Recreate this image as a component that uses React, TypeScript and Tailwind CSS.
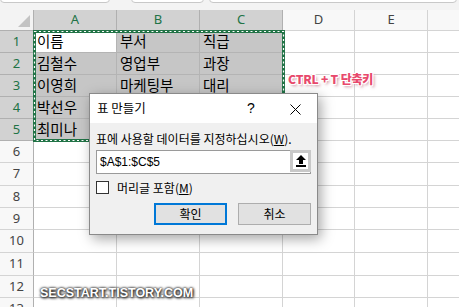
import React from "react";

const COLS = [
  { key: "A", cls: "w-[83px]", sel: true },
  { key: "B", cls: "w-[83px]", sel: true },
  { key: "C", cls: "w-[83px]", sel: true },
  { key: "D", cls: "w-[72px]", sel: false },
  { key: "E", cls: "w-[73px]", sel: false },
  { key: "F", cls: "w-[80px]", sel: false },
];

const ROWS: { h: string; cells: string[] }[] = [
  { h: "h-[22px]", cells: ["이름", "부서", "직급"] },
  { h: "h-[22px]", cells: ["김철수", "영업부", "과장"] },
  { h: "h-[22px]", cells: ["이영희", "마케팅부", "대리"] },
  { h: "h-[22px]", cells: ["박선우", "인사부", "사원"] },
  { h: "h-[22px]", cells: ["최미나", "총무부", "주임"] },
  { h: "h-[22px]", cells: [] },
  { h: "h-[23px]", cells: [] },
  { h: "h-[22px]", cells: [] },
  { h: "h-[22px]", cells: [] },
  { h: "h-[23px]", cells: [] },
  { h: "h-[23px]", cells: [] },
  { h: "h-[22px]", cells: [] },
  { h: "h-[22px]", cells: [] },
];

function Cell({ col, row, text }: { col: number; row: number; text?: string }) {
  const inSel = col < 3 && row < 5;
  const active = col === 0 && row === 0;
  let bg = "bg-white border-[#d4d4d4]";
  if (inSel && !active) bg = "bg-[#c6c6c6] border-[#b4b4b4]";
  if (active) bg = "bg-white border-[#b4b4b4]";
  return (
    <div
      className={`${COLS[col].cls} shrink-0 h-full border-r border-b ${bg} flex items-center pl-[3px] text-[14.5px] leading-none text-black`}
    >
      {text}
    </div>
  );
}

export default function App() {
  return (
    <div className="relative w-[459px] h-[307px] overflow-hidden bg-white font-['Noto_Sans_CJK_KR',sans-serif]">
      {/* formula bar remnants */}
      <div className="relative h-[10px] bg-[#f3f3f3]">
        <div className="absolute left-0 top-[-8px] w-[110px] h-[11px] rounded-b-[4px] bg-white border border-[#c8c8c8]" />
        <div className="absolute left-[131px] top-[-8px] w-[73px] h-[11px] rounded-b-[4px] bg-white border border-[#c8c8c8]" />
        <div className="absolute left-[209px] top-[-8px] w-[248px] h-[11px] rounded-b-[4px] bg-white border border-[#c8c8c8]" />
      </div>

      {/* column headers */}
      <div className="flex h-[21px] font-['Noto_Sans',sans-serif] text-[13px]">
        <div className="relative w-[34px] shrink-0 bg-[#f3f3f3] border-r border-b border-[#b0b0b0]">
          <svg className="absolute right-[3px] bottom-[3px]" width="12" height="12" viewBox="0 0 12 12">
            <polygon points="12,0 12,12 0,12" fill="#c3c3c3" />
          </svg>
        </div>
        {COLS.map((c) => (
          <div
            key={c.key}
            className={`${c.cls} shrink-0 flex items-center justify-center border-r border-b ${
              c.sel
                ? "bg-[#d2d2d2] border-[#b0b0b0] text-[#217346]"
                : "bg-[#f8f8f8] border-[#d4d4d4] text-[#444]"
            }`}
          >
            {c.key}
          </div>
        ))}
      </div>

      {/* rows */}
      {ROWS.map((r, ri) => (
        <div key={ri} className={`flex ${r.h}`}>
          <div
            className={`w-[34px] shrink-0 flex items-center justify-center border-r border-b font-['Noto_Sans',sans-serif] text-[13px] ${
              ri < 5
                ? "bg-[#d2d2d2] border-[#b0b0b0] text-[#217346]"
                : "bg-[#f8f8f8] border-[#d4d4d4] border-r-[#b0b0b0] text-[#444]"
            }`}
          >
            {ri + 1}
          </div>
          {COLS.map((c, ci) => (
            <Cell key={c.key} col={ci} row={ri} text={r.cells[ci]} />
          ))}
        </div>
      ))}

      {/* copy marquee */}
      <svg className="absolute left-[33px] top-[30px]" width="252" height="112" viewBox="0 0 252 112">
        <rect x="1.5" y="1.5" width="249" height="109" fill="none" stroke="#217346" strokeWidth="3" />
        <rect x="1.5" y="1.5" width="249" height="109" fill="none" stroke="#ffffff" strokeWidth="1.2" strokeDasharray="2 2.5" />
      </svg>

      {/* annotation */}
      <div className="absolute left-[288px] top-[73px] text-[12px] font-black leading-none tracking-[-0.2px] text-[#e8496c] font-['Noto_Sans_CJK_KR',sans-serif] [text-shadow:1px_0_0_#fff,-1px_0_0_#fff,0_1px_0_#fff,0_-1px_0_#fff,1px_1px_0_#fff,-1px_-1px_0_#fff,1px_-1px_0_#fff,-1px_1px_0_#fff,2px_2px_3px_rgba(150,40,70,0.55)]">
        CTRL + T 단축키
      </div>

      {/* dialog */}
      <div className="absolute left-[89px] top-[93px] w-[229px] h-[142px] border border-[#8a8a8a] bg-[#f0f0f0] flex flex-col shadow-[3px_4px_12px_rgba(0,0,0,0.35)]">
        <div className="h-[29px] bg-white flex items-center pl-[7px] text-[12.5px] text-black relative">
          <span>표 만들기</span>
          <span className="absolute left-[157px] top-[7px] text-[14px] leading-none font-['Liberation_Sans',sans-serif]">?</span>
          <svg className="absolute left-[200px] top-[10px]" width="11" height="11" viewBox="0 0 11 11">
            <path d="M0.5 0.5 L10.5 10.5 M10.5 0.5 L0.5 10.5" stroke="#000" strokeWidth="1" />
          </svg>
        </div>
        <div className="flex flex-col px-[6px] pt-[9px] text-[12px] text-black">
          <div className="h-[14px] leading-[14px]">
            표에 사용할 데이터를 지정하십시오(<span className="underline">W</span>).
          </div>
          <div className="mt-[4px] h-[24px] flex bg-white border border-[#9a9a9a]">
            <div className="flex-1 flex items-center pl-[3px] text-[12px] font-['Liberation_Sans',sans-serif]">$A$1:$C$5</div>
            <div className="w-[21px] h-full bg-[#c8c8c8] p-[3px] -my-px -mr-px">
              <div className="w-full h-full bg-white flex items-center justify-center">
                <svg width="10" height="12" viewBox="0 0 10 12">
                  <polygon points="5,0 10,5 7,5 7,9 3,9 3,5 0,5" fill="#000" />
                  <rect x="0" y="10" width="10" height="2" fill="#000" />
                </svg>
              </div>
            </div>
          </div>
          <div className="mt-[7px] flex items-center h-[13px]">
            <div className="w-[13px] h-[13px] bg-white border border-[#333]" />
            <span className="ml-[8px] leading-none">
              머리글 포함(<span className="underline">M</span>)
            </span>
          </div>
          <div className="mt-[9px] flex justify-end gap-[11px]">
            <div className="w-[73px] h-[22px] bg-[#e1e1e1] border-2 border-[#0078d7] flex items-center justify-center">확인</div>
            <div className="w-[73px] h-[22px] bg-[#e1e1e1] border border-[#adadad] flex items-center justify-center">취소</div>
          </div>
        </div>
      </div>

      {/* watermark */}
      <div className="absolute left-[40px] top-[287px] text-[12.5px] font-bold leading-none text-white font-['Liberation_Sans',sans-serif] [text-shadow:0_0_2px_#333,0_0_3px_#333,1px_1px_3px_#000]">
        SECSTART.TISTORY.COM
      </div>
    </div>
  );
}
